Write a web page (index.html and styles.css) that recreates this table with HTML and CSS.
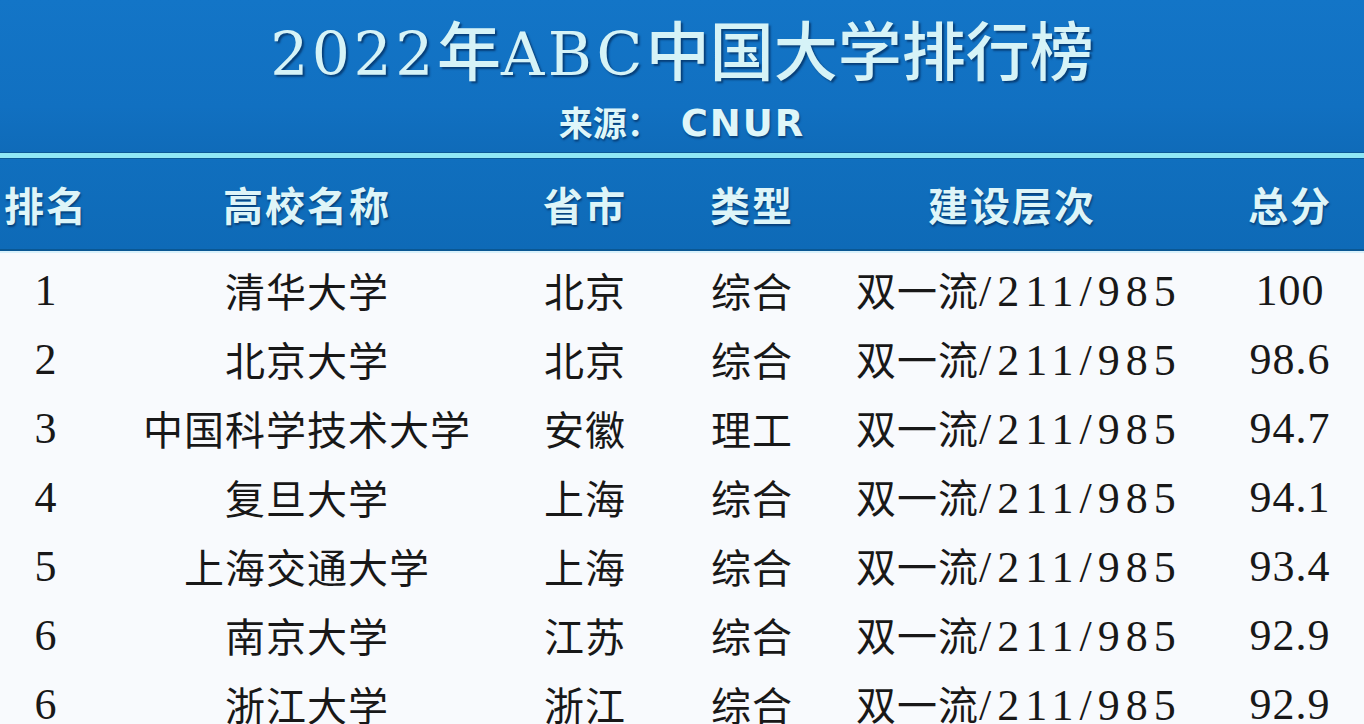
FILE: index.html
```html
<!DOCTYPE html>
<html lang="zh-CN">
<head>
<meta charset="utf-8">
<title>2022年ABC中国大学排行榜</title>
<link rel="stylesheet" href="styles.css">
</head>
<body>
<div class="page">
  <header class="banner">
    <h1 class="title"><span class="lat">2022</span>年<span class="lat">ABC</span>中国大学排行榜</h1>
    <p class="source">来源：<span class="code">CNUR</span></p>
  </header>
  <div class="rule"></div>
  <div class="table">
    <div class="row head">
      <div class="cell">排名</div>
      <div class="cell">高校名称</div>
      <div class="cell">省市</div>
      <div class="cell">类型</div>
      <div class="cell">建设层次</div>
      <div class="cell score">总分</div>
    </div>
    <div class="body">
      <div class="row">
        <div class="cell num">1</div>
        <div class="cell">清华大学</div>
        <div class="cell">北京</div>
        <div class="cell">综合</div>
        <div class="cell">双一流<span class="lv">/211/985</span></div>
        <div class="cell score num">100</div>
      </div>
      <div class="row">
        <div class="cell num">2</div>
        <div class="cell">北京大学</div>
        <div class="cell">北京</div>
        <div class="cell">综合</div>
        <div class="cell">双一流<span class="lv">/211/985</span></div>
        <div class="cell score num">98.6</div>
      </div>
      <div class="row">
        <div class="cell num">3</div>
        <div class="cell">中国科学技术大学</div>
        <div class="cell">安徽</div>
        <div class="cell">理工</div>
        <div class="cell">双一流<span class="lv">/211/985</span></div>
        <div class="cell score num">94.7</div>
      </div>
      <div class="row">
        <div class="cell num">4</div>
        <div class="cell">复旦大学</div>
        <div class="cell">上海</div>
        <div class="cell">综合</div>
        <div class="cell">双一流<span class="lv">/211/985</span></div>
        <div class="cell score num">94.1</div>
      </div>
      <div class="row">
        <div class="cell num">5</div>
        <div class="cell">上海交通大学</div>
        <div class="cell">上海</div>
        <div class="cell">综合</div>
        <div class="cell">双一流<span class="lv">/211/985</span></div>
        <div class="cell score num">93.4</div>
      </div>
      <div class="row">
        <div class="cell num">6</div>
        <div class="cell">南京大学</div>
        <div class="cell">江苏</div>
        <div class="cell">综合</div>
        <div class="cell">双一流<span class="lv">/211/985</span></div>
        <div class="cell score num">92.9</div>
      </div>
      <div class="row">
        <div class="cell num">6</div>
        <div class="cell">浙江大学</div>
        <div class="cell">浙江</div>
        <div class="cell">综合</div>
        <div class="cell">双一流<span class="lv">/211/985</span></div>
        <div class="cell score num">92.9</div>
      </div>
    </div>
  </div>
</div>
</body>
</html>
```

FILE: styles.css
```css
html, body {
  margin: 0;
  padding: 0;
}
body {
  width: 1364px;
  height: 724px;
  overflow: hidden;
  background: #f8fafd;
  font-family: "Noto Sans CJK SC", "Noto Sans", sans-serif;
}
.page {
  width: 1364px;
}
.banner {
  height: 153px;
  box-sizing: border-box;
  padding-top: 7px;
  background: linear-gradient(180deg, #1375c7 0%, #1170c1 70%, #0f6bb9 100%);
  border-bottom: 1px solid #0b5896;
  text-align: center;
  color: #d8f4f8;
}
.title {
  margin: 0;
  font-size: 64px;
  line-height: 80px;
  font-weight: 500;
  color: #d6f3f7;
  text-shadow: 2px 2px 2px rgba(0, 35, 80, 0.65);
  white-space: nowrap;
}
.title .lat {
  font-family: "DejaVu Serif", "Liberation Serif", serif;
  font-size: 60px;
  font-weight: 400;
  letter-spacing: 3.5px;
}
.source {
  margin: 6px 0 0;
  font-size: 34px;
  line-height: 44px;
  font-weight: 700;
  color: #dff6f9;
  text-shadow: 1px 2px 2px rgba(0, 35, 80, 0.6);
  white-space: nowrap;
}
.source .code {
  font-family: "DejaVu Sans", "Liberation Sans", sans-serif;
  font-size: 37px;
  font-weight: 700;
  letter-spacing: 2px;
  margin-left: 20px;
}
.rule {
  height: 5px;
  background: #8fe7f5;
  border-bottom: 1px solid #0b5896;
}
.table {
  width: 1364px;
}
.row {
  display: grid;
  grid-template-columns: 92px 430px 126px 208px 312px 196px;
  align-items: center;
}
.cell {
  text-align: center;
  white-space: nowrap;
}
.cell.score {
  padding-left: 48px;
}
.head {
  height: 90px;
  background: linear-gradient(180deg, #106fbe 0%, #0e6ab7 100%);
  border-bottom: 2px solid #0a5793;
  box-shadow: 0 2px 0 #d9f1fb;
  color: #def5f8;
  font-size: 40px;
  font-weight: 700;
  letter-spacing: 2px;
  text-shadow: 1px 2px 2px rgba(0, 35, 80, 0.6);
}
.body {
  padding-top: 4px;
}
.body .row {
  height: 69px;
  font-size: 40px;
  line-height: 69px;
  letter-spacing: 1px;
  color: #181818;
}
.num {
  font-family: "Liberation Serif", "Noto Sans CJK SC", serif;
  font-size: 44px;
  letter-spacing: 1px;
}
.lv {
  font-family: "Liberation Serif", serif;
  font-size: 44px;
  letter-spacing: 6px;
}
```
